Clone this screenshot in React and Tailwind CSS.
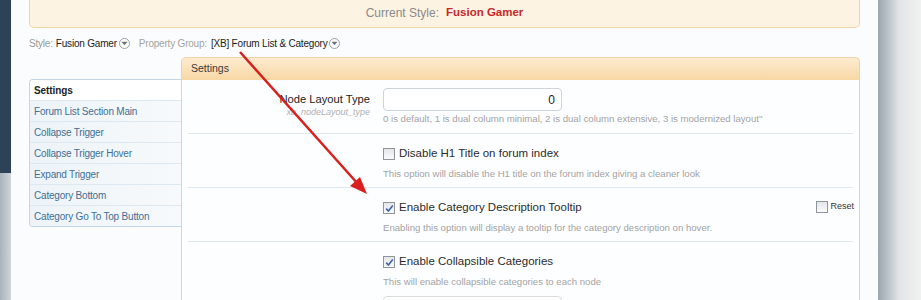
import React from "react";

const font = { fontFamily: '"Liberation Sans", Arial, sans-serif' };

function DropCircle() {
  return (
    <span className="inline-flex items-center justify-center w-[11px] h-[11px] rounded-full border border-[#9aa3ab] bg-white ml-[2px] align-middle">
      <svg width="7" height="5" viewBox="0 0 7 5">
        <polygon points="0.5,0.8 6.5,0.8 3.5,4.2" fill="#6b737a" />
      </svg>
    </span>
  );
}

function Checkbox({ checked }) {
  return (
    <span className="inline-flex items-center justify-center w-[12px] h-[12px] border border-[#8e959b] bg-gradient-to-b from-[#e4e6e8] to-[#fafafa] shrink-0">
      {checked && (
        <svg width="9" height="9" viewBox="0 0 9 9">
          <path d="M1.2 4.6 L3.4 7 L7.8 1.6" stroke="#3e63a8" strokeWidth="1.6" fill="none" />
        </svg>
      )}
    </span>
  );
}

function CheckRow({ title, hint, checked, reset }) {
  return (
    <div className="flex h-[54px] mx-[6px] border-b border-[#dde9f1]">
      <div className="w-[195px] shrink-0" />
      <div className="flex-1 pt-[12px]">
        <div className="flex items-center h-[16px]">
          <Checkbox checked={checked} />
          <span className="ml-[4px] text-[11.5px] text-[#2b2b2b]">{title}</span>
          {reset && (
            <span className="ml-auto mr-[-1px] flex items-center gap-[2px] -mt-[3px]">
              <Checkbox />
              <span className="text-[9px] text-[#333]">Reset</span>
            </span>
          )}
        </div>
        <div className="mt-[5px] text-[9.6px] leading-[13px] text-[#a3a3a3]">{hint}</div>
      </div>
    </div>
  );
}

const items = [
  "Forum List Section Main",
  "Collapse Trigger",
  "Collapse Trigger Hover",
  "Expand Trigger",
  "Category Bottom",
  "Category Go To Top Button",
];

export default function App() {
  return (
    <div className="relative w-[921px] h-[300px] overflow-hidden flex" style={font}>
      {/* left strip */}
      <div className="w-[11px] shrink-0 flex flex-col">
        <div className="h-[173px] bg-[#2c4256]" />
        <div className="flex-1 bg-gradient-to-r from-[#a9b3bc] to-[#cfd5da]" />
      </div>

      {/* main */}
      <div className="w-[867px] shrink-0 bg-[#fbfcfd] pl-[18px] pr-[18px]">
        <div className="h-[28px] bg-[#fdf3e2] border border-t-0 border-[#efd6aa] rounded-b-[5px] flex items-center justify-center text-[12px] pb-[2px]">
          <span className="text-[#8a8a8a]">Current Style:</span>
          <span className="ml-[7px] text-[#c8282a] font-bold text-[11.5px]">Fusion Gamer</span>
        </div>

        <div className="mt-[8px] h-[14px] flex items-center text-[10px] tracking-[-0.2px] whitespace-nowrap">
          <span className="text-[#999]">Style:</span>
          <span className="ml-[3px] text-[#222]">Fusion Gamer</span>
          <DropCircle />
          <span className="ml-[9px] text-[#a3a3a3]">Property Group:</span>
          <span className="ml-[4px] text-[#222]">[XB] Forum List &amp; Category</span>
          <DropCircle />
        </div>

        <div className="mt-[7px] flex">
          {/* sidebar */}
          <div className="w-[152px] shrink-0 mt-[22px]">
            <div className="border border-r-0 border-[#c3d6e4] rounded-l-[4px] overflow-hidden">
              <div className="h-[20px] flex items-center pl-[4px] text-[10px] tracking-[-0.1px] text-[#222] bg-white font-semibold">
                Settings
              </div>
              {items.map((t) => (
                <div
                  key={t}
                  className="h-[21px] border-t border-[#dde8f0] flex items-center pl-[4px] text-[10px] tracking-[-0.2px] text-[#436f93] bg-gradient-to-r from-[#edf3f8] to-[#f7fafc]"
                >
                  {t}
                </div>
              ))}
            </div>
          </div>

          {/* panel */}
          <div className="w-[679px] shrink-0">
            <div className="h-[23px] rounded-t-[5px] border border-b-0 border-[#ecd2a4] bg-gradient-to-b from-[#fdebd0] to-[#f8d8a4] flex items-center pl-[9px] text-[10.5px] text-[#3a3a3a]">
              Settings
            </div>
            <div className="h-[240px] border-l border-r border-[#c6d9e6] bg-[#fdfeff]">
              {/* row 1 */}
              <div className="flex h-[54px] mx-[6px] border-b border-[#dde9f1]">
                <div className="w-[182px] shrink-0 pt-[11px] text-right">
                  <div className="text-[11.2px] leading-[16px] text-[#222]">Node Layout Type</div>
                  <div className="text-[9px] leading-[11px] italic text-[#b0b0b0]">xb_nodeLayout_type</div>
                </div>
                <div className="flex-1 pl-[13px] pt-[8px]">
                  <div className="w-[179px] h-[23px] border border-[#cfd4d8] rounded-[4px] bg-white flex items-center justify-end pr-[6px] text-[12px] text-[#222]">
                    0
                  </div>
                  <div className="mt-[1px] text-[9.6px] leading-[13px] text-[#a3a3a3]">
                    0 is default, 1 is dual column minimal, 2 is dual column extensive, 3 is modernized layout"
                  </div>
                </div>
              </div>
              <CheckRow
                title="Disable H1 Title on forum index"
                hint="This option will disable the H1 title on the forum index giving a cleaner look"
              />
              <CheckRow
                checked
                reset
                title="Enable Category Description Tooltip"
                hint="Enabling this option will display a tooltip for the category description on hover."
              />
              <div className="flex h-[60px] mx-[6px]">
                <div className="w-[195px] shrink-0" />
                <div className="flex-1 pt-[12px]">
                  <div className="flex items-center h-[16px]">
                    <Checkbox checked />
                    <span className="ml-[4px] text-[11.5px] text-[#2b2b2b]">Enable Collapsible Categories</span>
                  </div>
                  <div className="mt-[5px] text-[9.6px] leading-[13px] text-[#a3a3a3]">
                    This will enable collapsible categories to each node
                  </div>
                  <div className="mt-[8px] w-[179px] h-[23px] border border-[#d8dcdf] rounded-[4px] bg-white" />
                </div>
              </div>
            </div>
          </div>
        </div>
      </div>

      {/* right strip */}
      <div className="flex-1 bg-gradient-to-r from-[#9ba6ae] via-[#e2e5e8] to-[#f1f1f1]" />

      {/* red annotation arrow */}
      <svg className="absolute left-0 top-0 pointer-events-none" width="921" height="300">
        <line x1="240" y1="52" x2="358" y2="184" stroke="#d9201e" strokeWidth="2.5" />
        <polygon points="367,194 350,186 360,177" fill="#d9201e" />
      </svg>
    </div>
  );
}
